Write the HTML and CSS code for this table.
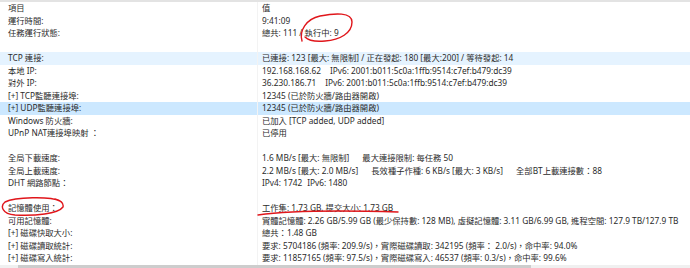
FILE: index.html
```html
<!DOCTYPE html>
<html lang="zh-Hant">
<head>
<meta charset="utf-8">
<title>統計</title>
<link rel="stylesheet" href="styles.css">
</head>
<body>
<div class="view">
  <div class="list">
    <div class="row head"><div class="k">項目</div><div class="v">值</div></div>
    <div class="row"><div class="k">運行時間:</div><div class="v">9:41:09</div></div>
    <div class="row"><div class="k">任務運行狀態:</div><div class="v">總共: 111 / 執行中: 9</div></div>
    <div class="row"><div class="k"></div><div class="v"></div></div>
    <div class="row hover"><div class="k">TCP 連接:</div><div class="v">已連接: 123 [最大: 無限制] / 正在發起: 180 [最大:200] / 等待發起: 14</div></div>
    <div class="row"><div class="k">本地 IP:</div><div class="v">192.168.168.62<span class="g9">IPv6: 2001:b011:5c0a:1ffb:9514:c7ef:b479:dc39</span></div></div>
    <div class="row"><div class="k">對外 IP:</div><div class="v">36.230.186.71<span class="g9">IPv6: 2001:b011:5c0a:1ffb:9514:c7ef:b479:dc39</span></div></div>
    <div class="row"><div class="k">[+] TCP監聽連接埠:</div><div class="v">12345 (已於防火牆/路由器開啟)</div></div>
    <div class="row sel"><div class="k">[+] UDP監聽連接埠:</div><div class="v">12345 (已於防火牆/路由器開啟)</div></div>
    <div class="row"><div class="k">Windows 防火牆:</div><div class="v">已加入 [TCP added, UDP added]</div></div>
    <div class="row"><div class="k">UPnP NAT連接埠映射 ：</div><div class="v">已停用</div></div>
    <div class="row"><div class="k"></div><div class="v"></div></div>
    <div class="row"><div class="k">全局下載速度:</div><div class="v">1.6 MB/s [最大: 無限制]<span class="g13">最大連接限制: 每任務 50</span></div></div>
    <div class="row"><div class="k">全局上載速度:</div><div class="v">2.2 MB/s [最大: 2.0 MB/s]<span class="g13">長效種子作種: 6 KB/s [最大: 3 KB/s]</span><span class="g13">全部BT上載連接數：88</span></div></div>
    <div class="row"><div class="k">DHT 網路節點：</div><div class="v">IPv4: 1742<span class="g4">IPv6: 1480</span></div></div>
    <div class="row"><div class="k"></div><div class="v"></div></div>
    <div class="row"><div class="k">記憶體使用：</div><div class="v">工作集: 1.73 GB, 提交大小: 1.73 GB</div></div>
    <div class="row"><div class="k">可用記憶體:</div><div class="v">實體記憶體: 2.26 GB/5.99 GB (最少保持數: 128 MB), 虛擬記憶體: 3.11 GB/6.99 GB, 進程空間: 127.9 TB/127.9 TB</div></div>
    <div class="row"><div class="k">[+] 磁碟快取大小:</div><div class="v">總共：1.48 GB</div></div>
    <div class="row"><div class="k">[+] 磁碟讀取統計:</div><div class="v">要求: 5704186 (頻率: 209.9/s)，實際磁碟讀取: 342195 (頻率： 2.0/s)，命中率: 94.0%</div></div>
    <div class="row"><div class="k">[+] 磁碟寫入統計:</div><div class="v">要求: 11857165 (頻率: 97.5/s)，實際磁碟寫入: 46537 (頻率: 0.3/s)，命中率: 99.6%</div></div>
  </div>
  <div class="hscroll"><div class="thumb"></div></div>
  <svg class="marks" width="690" height="268" viewBox="0 0 690 268">
    <path d="M302,41 C299,31 306,19 320,16 C335,13 352,12 352,22 C352,33 340,40 325,41 C315,42 308,40 305,37" />
    <path d="M60,201 C50,196 15,197 5,202 C0,206 2,214 15,215 C35,216 58,214 63,207 C64,203 60,200 55,199" />
    <path d="M258,215 Q300,209 398,212" />
  </svg>
</div>
</body>
</html>
```

FILE: styles.css
```css
html, body {
  margin: 0;
  padding: 0;
  background: #ffffff;
}

.view {
  position: relative;
  width: 690px;
  height: 268px;
  overflow: hidden;
  font-family: "Noto Sans", "Noto Sans CJK TC", sans-serif;
  font-size: 8.3px;
  color: #2b2b2b;
  display: flex;
  flex-direction: column;
}

.list {
  flex: 1;
  display: flex;
  flex-direction: column;
}

.row {
  display: grid;
  grid-template-columns: 257px 1fr;
  height: 12.5px;
  line-height: 12.5px;
  white-space: nowrap;
}

.row.head {
  border-top: 2px solid #e3e3e3;
}

.row.hover {
  background: #e5f3ff;
}

.row.sel {
  background: #cce8ff;
}

.k {
  padding-left: 8px;
  overflow: hidden;
}

.v {
  padding-left: 4px;
  border-left: 1px solid #f3f3f3;
  overflow: hidden;
}

.g4 { margin-left: 5px; }
.g9 { margin-left: 9px; }
.g13 { margin-left: 13px; }

.hscroll {
  height: 3.5px;
  background: #f0f0f0;
  display: flex;
  padding-left: 18px;
}

.thumb {
  width: 513px;
  background: #cdcdcd;
}

.marks {
  position: absolute;
  left: 0;
  top: 0;
  pointer-events: none;
}

.marks path {
  fill: none;
  stroke: #e0161b;
  stroke-width: 1.4;
  stroke-linecap: round;
}
```
